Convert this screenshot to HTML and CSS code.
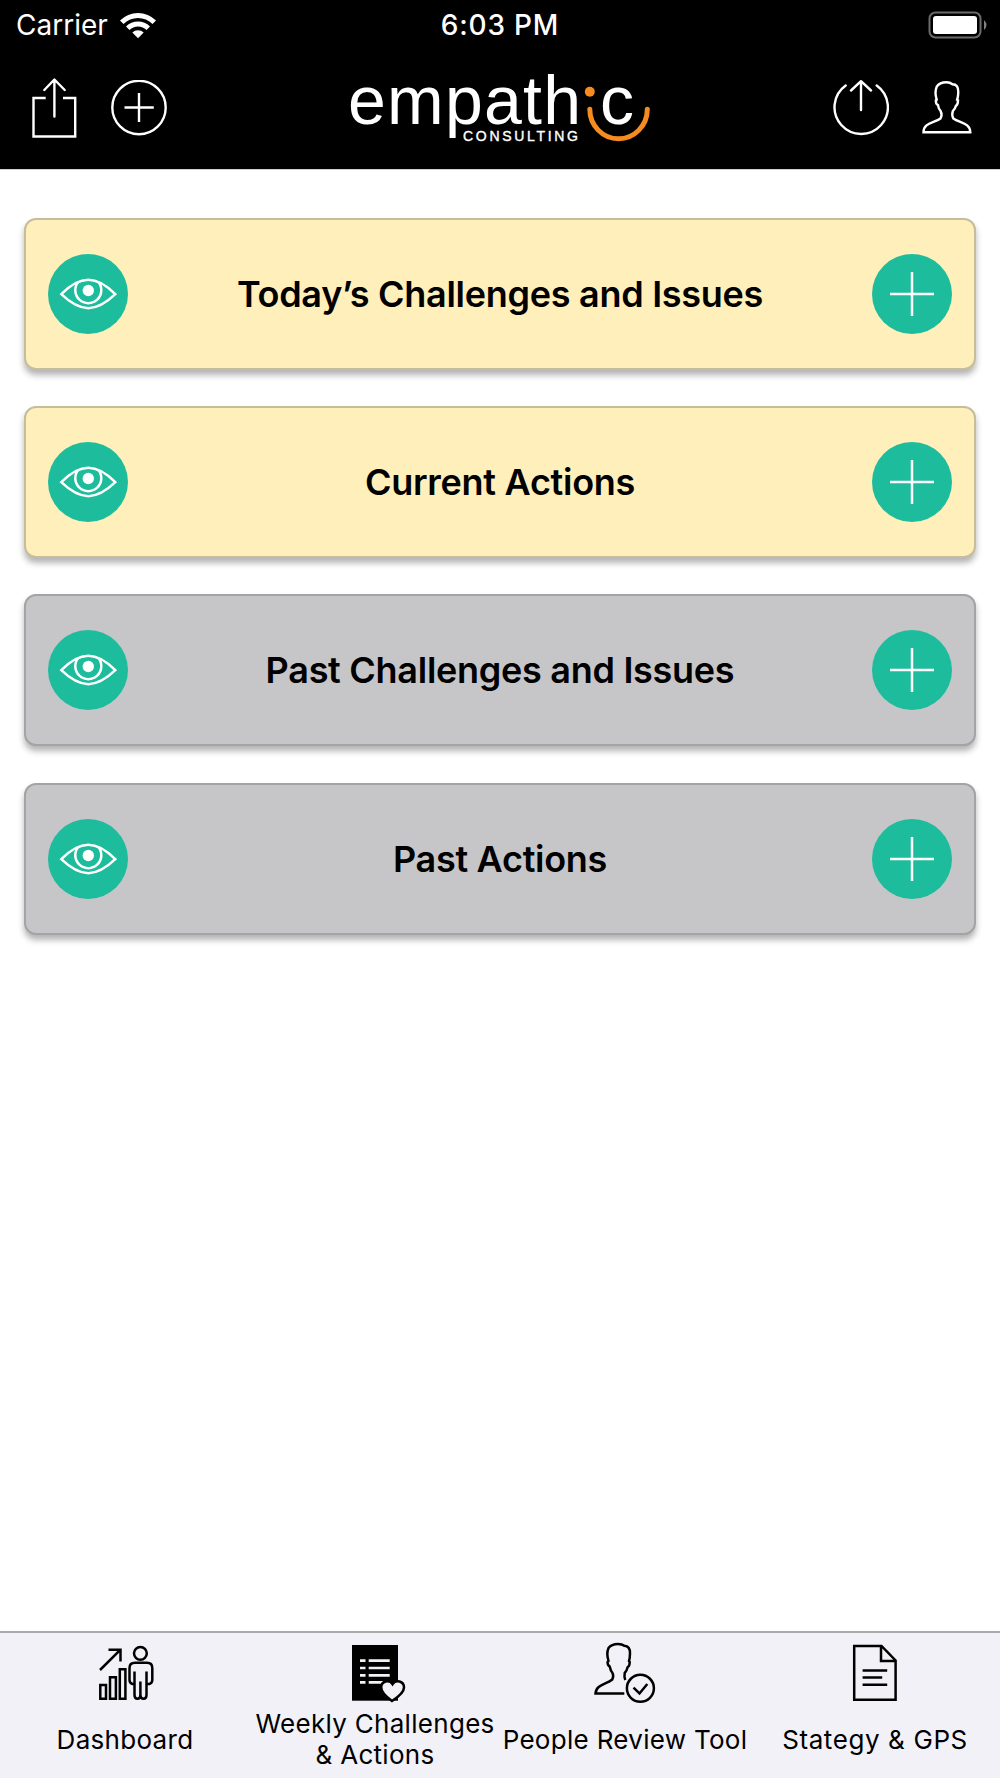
FILE: index.html
```html
<!DOCTYPE html>
<html lang="en">
<head>
    <meta charset="UTF-8">
    <meta name="viewport" content="width=device-width">
    <title>Empathic Consulting</title>
    <link rel="stylesheet" href="styles.css">
</head>
<body>
    <!-- shared icons for the cards -->
    <svg class="sprite">
        <symbol id="eye" viewBox="0 0 80 80">
            <path d="M13.300 40.200C23 30.500 32 25.800 40.300 25.800C48.600 25.800 57.600 30.500 67.300 40.200C57.600 49.500 48.600 54.200 40.300 54.200C32 54.200 23 49.500 13.300 40.200Z"/>
            <path d="M30.200 28A13 13 0 1 0 50.400 28"/>
            <circle class="pupil" cx="40.300" cy="36.500" r="5.700"/>
        </symbol>
        <symbol id="plus" viewBox="0 0 80 80">
            <path d="M18 40H62M40 18V62"/>
        </symbol>
    </svg>

    <header class="header">
        <div class="status-bar">
            <div class="carrier">
                <span>Carrier</span>
                <svg width="38" height="28" viewBox="0 0 38 28">
                    <path d="M1 9.500A25.500 25.500 0 0 1 37 9.500L33.500 13A20.500 20.500 0 0 0 4.500 13Z"/>
                    <path d="M7 15.500A17 17 0 0 1 31 15.500L27.500 19A12 12 0 0 0 10.500 19Z"/>
                    <path d="M13.300 21.500A8.500 8.500 0 0 1 24.700 21.500L19 27.300Z"/>
                </svg>
            </div>
            <span class="time">6:03 PM</span>
            <svg class="battery" width="62" height="28" viewBox="0 0 62 28">
                <rect class="shell" x="1.500" y="1.500" width="51" height="25" rx="6"/>
                <rect x="5" y="5" width="44" height="18" rx="3"/>
                <path class="nub" d="M56 9Q61 14 56 19Z"/>
            </svg>
        </div>
        <nav class="nav-bar">
            <div class="nav-group">
                <svg class="line-icon" width="46" height="60" viewBox="0 0 46 60">
                    <path d="M13.700 20H1.500V58.500H43.200V20H31"/>
                    <path class="round" d="M12.300 12L22.400 1.500L32.700 12M22.400 2V38.500"/>
                </svg>
                <svg class="line-icon" width="56" height="56" viewBox="0 0 56 56">
                    <circle cx="28" cy="27.500" r="26.700"/>
                    <path d="M13.500 27.500H42.800M28 13V42"/>
                </svg>
            </div>
            <svg class="logo" width="310" height="75" viewBox="0 0 310 75">
                <text class="logo-name" x="3" y="53.500" textLength="233">empath</text>
                <text class="logo-name" x="255" y="53.500">c</text>
                <text class="logo-sub" x="118" y="70.500" textLength="115">CONSULTING</text>
                <circle class="logo-dot" cx="244.800" cy="21.700" r="5"/>
                <path class="logo-smile" d="M244.800 39.300A28.700 29.400 0 0 0 302.300 39.300"/>
            </svg>
            <div class="nav-group">
                <svg class="line-icon" width="56" height="56" viewBox="0 0 56 56">
                    <path class="round" d="M12.700 5.500A26.700 26.700 0 1 0 43.700 5.500M28 30V1.200M18 10.500L28 1.200L38 10.500"/>
                </svg>
                <svg class="line-icon" width="50" height="54" viewBox="0 0.8 50 54">
                    <path d="M1.500 52C1.500 42.500 12 43 18.500 38.300Q20.500 34.500 18.700 31Q16.500 29 16 25Q13.500 24 13.900 20L14.700 19.500C13 14 13.200 10 14.700 6.500Q17.500 2 24.500 2Q28 2 30.500 4Q36.500 4 36.300 12Q36.200 17 35.100 19.500L36 20Q36 24.500 34 25.500Q33 29 30.800 31Q29.500 35 31.300 38.300C38 43 48 42.500 48.300 52Z"/>
                </svg>
            </div>
        </nav>
    </header>

    <main class="cards">
        <section class="card">
            <button class="round-btn"><svg><use href="#eye"/></svg></button>
            <h2>Today’s Challenges and Issues</h2>
            <button class="round-btn"><svg><use href="#plus"/></svg></button>
        </section>
        <section class="card">
            <button class="round-btn"><svg><use href="#eye"/></svg></button>
            <h2>Current Actions</h2>
            <button class="round-btn"><svg><use href="#plus"/></svg></button>
        </section>
        <section class="card past">
            <button class="round-btn"><svg><use href="#eye"/></svg></button>
            <h2>Past Challenges and Issues</h2>
            <button class="round-btn"><svg><use href="#plus"/></svg></button>
        </section>
        <section class="card past">
            <button class="round-btn"><svg><use href="#eye"/></svg></button>
            <h2>Past Actions</h2>
            <button class="round-btn"><svg><use href="#plus"/></svg></button>
        </section>
    </main>

    <footer class="tab-bar">
        <div class="tab">
            <svg class="tab-icon" viewBox="0 0 80 64">
                <path d="M15 30L35.500 9.700M23.500 9.700H35.500V21.500"/>
                <path d="M15.300 45H21V58.700H15.300ZM25 37.200H30.900V58.700H25ZM34.800 29.200H40.400V58.700H34.800Z"/>
                <circle cx="55.400" cy="13.300" r="6.400"/>
                <path d="M49.500 31.500V55Q49.500 58.700 52.500 58.700Q55.400 58.700 55.400 55V41.500V55Q55.400 58.700 58.500 58.700Q61.500 58.700 61.500 55V31.500M49.500 44H47.500Q44.500 43 44.500 40V28Q44.500 22.800 50 22.800H62Q67.300 22.800 67.300 28V40Q67.300 43 64.500 44H61.500"/>
            </svg>
            <div class="label"><span>Dashboard</span></div>
        </div>
        <div class="tab">
            <svg class="tab-icon" viewBox="0 0 80 64">
                <rect class="solid" x="17" y="5" width="46" height="55.700"/>
                <path class="list" d="M25 20.700H30.500M33.700 20.700H54.700M25 28H30.500M33.700 28H54.700M25 35.300H30.500M33.700 35.300H54.700M25 42.400H30.500M33.700 42.400H50"/>
                <path class="heart" d="M57 61C50 56 46.200 52.500 46.200 47.500C46.200 41.500 54 38.700 57.600 44.200C61 38.700 69 41.500 69 47.500C69 52.500 64 56.500 57 61Z"/>
            </svg>
            <div class="label"><span>Weekly Challenges<br>&amp; Actions</span></div>
        </div>
        <div class="tab">
            <svg class="tab-icon" viewBox="0 0 80 64">
                <path d="M39.300 53.500H10.500C11 44.500 21 44.500 27.300 39.500Q29 36 27.500 33Q25.500 30.500 24.700 26.500Q22.500 25.500 22.600 22L23.500 21C21.800 15.500 22 11.500 23.500 8Q26.500 3.900 33 3.900Q37 3.900 39.300 5.700Q45.300 6 45 13.500Q44.900 18.500 44 21L44.700 22Q44.700 26 42.700 27Q41.700 31 39.700 33Q39 37 40.300 40"/>
                <circle cx="55.400" cy="48.300" r="13.500"/>
                <path d="M48.500 47.700L54.500 53.500L62.300 44"/>
            </svg>
            <div class="label"><span>People Review Tool</span></div>
        </div>
        <div class="tab">
            <svg class="tab-icon" viewBox="0 0 80 64">
                <path d="M19.200 6H46.500L60.600 20.500V59.700H19.200ZM46 6V21H60.600M27.600 30.400H52.200M27.600 37.500H47.200M27.600 44.800H52.200"/>
            </svg>
            <div class="label wide"><span>Stategy &amp; GPS</span></div>
        </div>
    </footer>
</body>
</html>
```
FILE: styles.css
```css
* {
    box-sizing: border-box;
}
body {
    margin: 0;
    height: 1778px;
    display: flex;
    flex-direction: column;
    background: #fff;
    color: #000;
    font-family: Inter, sans-serif;
}
svg {
    display: block;
    flex: none;
}
.sprite {
    width: 0;
    height: 0;
    overflow: hidden;
    position: absolute;
}

/* header */
.header {
    height: 170px;
    background: #000;
    color: #fff;
    border-bottom: 1px solid #d0d0d0;
}
.status-bar {
    height: 50px;
    padding: 0 10px 0 16px;
    display: grid;
    grid-template-columns: 1fr auto 1fr;
    align-items: center;
    font-size: 28px;
    fill: #fff;
}
.carrier {
    display: flex;
    align-items: center;
    gap: 11px;
}
.time {
    font-weight: 500;
    letter-spacing: 0.8px;
    margin-right: 6px;
}
.battery {
    justify-self: end;
}
.shell {
    fill: none;
    stroke: #6b6b6b;
    stroke-width: 2;
}
.nub {
    fill: #808080;
}
.nav-bar {
    height: 115px;
    padding: 0 28px 0 32px;
    display: flex;
    align-items: center;
    justify-content: space-between;
}
.nav-group {
    display: flex;
    align-items: center;
    gap: 33px;
}
.line-icon {
    fill: none;
    stroke: #fff;
    stroke-width: 2.4;
}
.round {
    stroke-linecap: round;
    stroke-linejoin: round;
}
.logo {
    overflow: visible;
    font-family: "Liberation Sans", sans-serif;
    fill: #fff;
}
.logo-name {
    font-size: 68px;
}
.logo-sub {
    font-size: 14px;
    stroke: #fff;
    stroke-width: 0.4;
}
.logo-dot {
    fill: #f68b1f;
}
.logo-smile {
    fill: none;
    stroke: #f68b1f;
    stroke-width: 5;
    stroke-linecap: round;
}

/* cards */
.cards {
    flex: 1;
    padding: 47.5px 24px 0;
    display: flex;
    flex-direction: column;
    gap: 36.4px;
}
.card {
    height: 152px;
    padding: 0 22px;
    display: flex;
    align-items: center;
    justify-content: space-between;
    background: #ffefba;
    border: 2px solid #c6bd9b;
    border-radius: 12px;
    box-shadow: 0 5px 6px rgba(0, 0, 0, 0.3);
}
.card.past {
    background: #c6c6c8;
    border-color: #a4a4a6;
}
.card h2 {
    margin: 0;
    font-size: 36px;
    font-weight: 600;
    letter-spacing: -0.28px;
}
.round-btn {
    width: 80px;
    height: 80px;
    padding: 0;
    border: none;
    border-radius: 50%;
    background: #1dbc9c;
}
.round-btn svg {
    width: 80px;
    height: 80px;
    fill: none;
    stroke: #fff;
    stroke-width: 2.5;
}
.pupil {
    fill: #fff;
    stroke: none;
}

/* bottom tabs */
.tab-bar {
    height: 147px;
    padding-top: 7px;
    display: grid;
    grid-template-columns: repeat(4, 1fr);
    background: #f2f1f7;
    border-top: 2px solid #a9a9ac;
}
.tab {
    display: flex;
    flex-direction: column;
    align-items: center;
}
.tab-icon {
    width: 80px;
    height: 64px;
    fill: none;
    stroke: #000;
    stroke-width: 2.5;
}
.solid {
    fill: #000;
    stroke: none;
}
.list {
    stroke: #f2f1f7;
    stroke-width: 2.7;
}
.heart {
    fill: #f2f1f7;
}
.label {
    height: 70px;
    display: flex;
    align-items: center;
    text-align: center;
    white-space: nowrap;
    font-size: 26px;
    line-height: 31px;
    letter-spacing: 0.3px;
}
.label.wide {
    letter-spacing: 0.6px;
}
```
